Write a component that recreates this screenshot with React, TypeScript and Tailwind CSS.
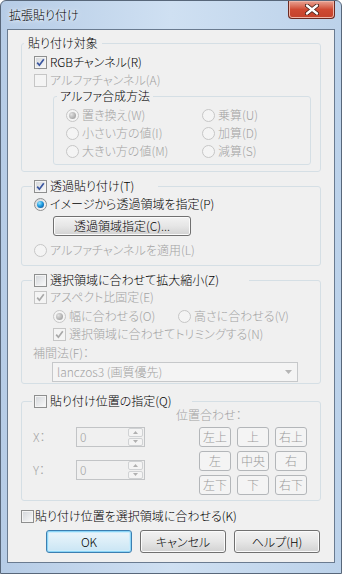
import React from "react";

const GREY = "text-[#a3a3a3]";

function Check({ checked, disabled }: { checked?: boolean; disabled?: boolean }) {
  return (
    <span
      className={`flex h-[13px] w-[13px] shrink-0 items-center justify-center border ${
        disabled
          ? "border-[#c6c6c6] bg-[#f4f4f4]"
          : "border-[#8e8f8f] bg-linear-to-br from-[#d2d5d9] to-[#fbfbfb] shadow-[inset_0_0_0_1px_#f4f4f4]"
      }`}
    >
      {checked && (
        <svg width="9" height="9" viewBox="0 0 9 9">
          <path
            d="M1.2 4.6 L3.4 7.2 L7.8 1.2"
            fill="none"
            stroke={disabled ? "#a8a8a8" : "#3b57a0"}
            strokeWidth="1.7"
          />
        </svg>
      )}
    </span>
  );
}

function Radio({ checked, disabled }: { checked?: boolean; disabled?: boolean }) {
  return (
    <span
      className={`flex h-[13px] w-[13px] shrink-0 items-center justify-center rounded-full border ${
        disabled
          ? "border-[#c6c6c6] bg-[#f4f4f4]"
          : "border-[#8e8f8f] bg-linear-to-br from-[#d2d5d9] to-[#fbfbfb]"
      }`}
    >
      {checked && (
        <span
          className={`h-[7px] w-[7px] rounded-full ${
            disabled
              ? "bg-[radial-gradient(circle_at_35%_35%,#e2e2e2,#a9a9a9_70%)]"
              : "bg-[radial-gradient(circle_at_35%_30%,#9fe6ff,#1d9be0_45%,#0b3f86)]"
          }`}
        />
      )}
    </span>
  );
}

function Row({
  children,
  className = "",
}: {
  children: React.ReactNode;
  className?: string;
}) {
  return (
    <div className={`flex h-[16px] items-center gap-[3px] leading-[16px] whitespace-nowrap ${className}`}>
      {children}
    </div>
  );
}

function Group({
  legend,
  className = "",
  legendCls = "",
  children,
}: {
  legend: React.ReactNode;
  className?: string;
  legendCls?: string;
  children: React.ReactNode;
}) {
  return (
    <fieldset className={`rounded-[3px] border border-[#d5dfe5] ${className}`}>
      <legend className={`h-[16px] leading-[16px] whitespace-nowrap ${legendCls}`}>{legend}</legend>
      {children}
    </fieldset>
  );
}

function PosButton({ label }: { label: string }) {
  return (
    <div className="flex h-[20px] items-center justify-center rounded-[3px] border border-[#b3b6b9] bg-[#f4f4f4] text-[#9a9a9a]">
      {label}
    </div>
  );
}

function Spin() {
  return (
    <div className="flex h-[20px] w-[69px] items-center border border-[#c2c4c6] bg-[#f0f0f0]">
      <span className={`flex-1 pl-[3px] ${GREY}`}>0</span>
      <div className="mr-px flex h-[18px] w-[15px] flex-col gap-px">
        <div className="flex flex-1 items-center justify-center rounded-[2px] border border-[#d0d2d4] bg-[#f4f4f4]">
          <svg width="5" height="3" viewBox="0 0 5 3">
            <path d="M0 3 L2.5 0 L5 3 Z" fill="#b0b0b0" />
          </svg>
        </div>
        <div className="flex flex-1 items-center justify-center rounded-[2px] border border-[#d0d2d4] bg-[#f4f4f4]">
          <svg width="5" height="3" viewBox="0 0 5 3">
            <path d="M0 0 L2.5 3 L5 0 Z" fill="#b0b0b0" />
          </svg>
        </div>
      </div>
    </div>
  );
}

function DlgButton({ label, primary }: { label: string; primary?: boolean }) {
  return (
    <div
      className={`flex h-[23px] w-[86px] items-center justify-center rounded-[3px] border ${
        primary
          ? "border-[#3c7fb1] bg-linear-to-b from-[#ecf5fa] via-[#dbeef8] to-[#c9e5f4] shadow-[inset_0_0_0_1px_#8bd5f7,inset_0_0_0_2px_#cbecfb]"
          : "border-[#707070] bg-linear-to-b from-[#f2f2f2] via-[#e6e6e6] to-[#d2d2d2] shadow-[inset_0_0_0_1px_#fbfbfb]"
      }`}
    >
      {label}
    </div>
  );
}

export default function App() {
  return (
    <div className="flex h-[574px] w-[342px] flex-col overflow-hidden rounded-t-[6px] border border-[#58677a] bg-linear-to-r from-[#b6cce6] via-[#cfe0f2] to-[#bcd2ea] font-['Meiryo_UI','Noto_Sans_CJK_JP',sans-serif] text-[12px] font-light text-black [font-feature-settings:'palt']">
      {/* title bar */}
      <div className="flex h-[28px] shrink-0 items-start justify-between pl-[8px] pr-[6px]">
        <span className="mt-[6px] leading-[16px] [text-shadow:0_0_6px_#fff,0_0_3px_#fff]">拡張貼り付け</span>
        <div className="flex h-[18px] w-[47px] items-center justify-center rounded-b-[4px] border border-t-0 border-[#6b2a22] bg-linear-to-b from-[#e8a293] via-[#cf4a33] to-[#c3422c] shadow-[inset_0_0_0_1px_#f0b4a6]">
          <svg width="14" height="11" viewBox="0 0 14 11">
            <path d="M2 1.5 L12 9.5 M12 1.5 L2 9.5" stroke="#3d1a14" strokeWidth="4" strokeLinecap="round" />
            <path d="M2 1.5 L12 9.5 M12 1.5 L2 9.5" stroke="#ffffff" strokeWidth="2.4" strokeLinecap="round" />
          </svg>
        </div>
      </div>

      {/* client area */}
      <div className="mx-[6px] mb-[10px] flex flex-1 flex-col border border-[#6a7b90] bg-[#f0f0f0]">
        {/* group 1 */}
        <Group legend="貼り付け対象" className="mx-[13px] mt-[5px]" legendCls="ml-[2px] px-[4px]">
          <div className="pl-[12px] pt-[3px] pb-[6px]">
            <Row>
              <Check checked />
              <span>RGBチャンネル(R)</span>
            </Row>
            <Row className="mt-[2px]">
              <Check disabled />
              <span className={GREY}>アルファチャンネル(A)</span>
            </Row>
            <Group
              legend="アルファ合成方法"
              className="ml-[19px] w-[258px]"
              legendCls="ml-[3px] px-[3px]"
            >
              <div className="grid grid-cols-[136px_1fr] gap-y-[2px] pl-[12px] pt-[3px] pb-[5px]">
                <Row>
                  <Radio checked disabled />
                  <span className={GREY}>置き換え(W)</span>
                </Row>
                <Row>
                  <Radio disabled />
                  <span className={GREY}>乗算(U)</span>
                </Row>
                <Row>
                  <Radio disabled />
                  <span className={GREY}>小さい方の値(I)</span>
                </Row>
                <Row>
                  <Radio disabled />
                  <span className={GREY}>加算(D)</span>
                </Row>
                <Row>
                  <Radio disabled />
                  <span className={GREY}>大きい方の値(M)</span>
                </Row>
                <Row>
                  <Radio disabled />
                  <span className={GREY}>減算(S)</span>
                </Row>
              </div>
            </Group>
          </div>
        </Group>

        {/* group 2 */}
        <Group
          className="mx-[13px] mt-[6px]"
          legendCls="ml-[10px] pl-[2px] pr-[24px]"
          legend={
            <span className="flex items-center gap-[3px]">
              <Check checked />
              <span>透過貼り付け(T)</span>
            </span>
          }
        >
          <div className="pl-[12px] pt-[2px] pb-[7px]">
            <Row>
              <Radio checked />
              <span>イメージから透過領域を指定(P)</span>
            </Row>
            <div className="mt-[4px] ml-[19px] w-[138px]">
              <div className="flex h-[20px] items-center justify-center rounded-[3px] border border-[#707070] bg-linear-to-b from-[#f2f2f2] via-[#e6e6e6] to-[#d2d2d2] shadow-[inset_0_0_0_1px_#fbfbfb]">
                透過領域指定(C)...
              </div>
            </div>
            <Row className="mt-[6px]">
              <Radio disabled />
              <span className={GREY}>アルファチャンネルを適用(L)</span>
            </Row>
          </div>
        </Group>

        {/* group 3 */}
        <Group
          className="mx-[13px] mt-[6px]"
          legendCls="ml-[10px] pl-[2px] pr-[30px]"
          legend={
            <span className="flex items-center gap-[3px]">
              <Check />
              <span>選択領域に合わせて拡大縮小(Z)</span>
            </span>
          }
        >
          <div className="pl-[12px] pt-[1px] pb-[1px]">
            <Row>
              <Check checked disabled />
              <span className={GREY}>アスペクト比固定(E)</span>
            </Row>
            <Row className="mt-[3px] pl-[19px]">
              <span className="flex w-[122px] items-center gap-[3px]">
                <Radio checked disabled />
                <span className={GREY}>幅に合わせる(O)</span>
              </span>
              <Radio disabled />
              <span className={GREY}>高さに合わせる(V)</span>
            </Row>
            <Row className="mt-[2px] pl-[19px]">
              <Check checked disabled />
              <span className={GREY}>選択領域に合わせてトリミングする(N)</span>
            </Row>
            <Row className="mt-[3px] -ml-px">
              <span className={GREY}>補間法(F)：</span>
            </Row>
            <div className="mt-[1px] ml-[18px] flex h-[20px] w-[246px] items-center border border-[#c6c8ca] bg-[#f4f4f4] px-[4px]">
              <span className={`flex-1 ${GREY}`}>lanczos3 (画質優先)</span>
              <svg width="7" height="4" viewBox="0 0 7 4" className="mr-[1px]">
                <path d="M0 0 L3.5 4 L7 0 Z" fill="#b5b5b5" />
              </svg>
            </div>
          </div>
        </Group>

        {/* group 4 */}
        <Group
          className="mx-[13px] mt-[9px]"
          legendCls="ml-[10px] pl-[2px] pr-[20px]"
          legend={
            <span className="flex items-center gap-[3px]">
              <Check />
              <span>貼り付け位置の指定(Q)</span>
            </span>
          }
        >
          <div className="flex pl-[11px] pb-[5px]">
            <div className="w-[143px] pt-[18px]">
              <div className="flex h-[20px] items-center">
                <span className={`w-[43px] ${GREY}`}>X：</span>
                <Spin />
              </div>
              <div className="mt-[13px] flex h-[20px] items-center">
                <span className={`w-[43px] ${GREY}`}>Y：</span>
                <Spin />
              </div>
            </div>
            <div>
              <div className={`h-[12px] leading-[12px] ${GREY}`}>位置合わせ：</div>
              <div className="mt-[6px] ml-[23px] grid grid-cols-[32px_32px_32px] gap-x-[6px] gap-y-[4px]">
                {["左上", "上", "右上", "左", "中央", "右", "左下", "下", "右下"].map((l) => (
                  <PosButton key={l} label={l} />
                ))}
              </div>
            </div>
          </div>
        </Group>

        <Row className="mt-[7px] ml-[13px] !gap-[1px]">
          <Check />
          <span>貼り付け位置を選択領域に合わせる(K)</span>
        </Row>

        <div className="mt-[6px] flex gap-[8px] pl-[38px]">
          <DlgButton label="OK" primary />
          <DlgButton label="キャンセル" />
          <DlgButton label="ヘルプ(H)" />
        </div>
      </div>
    </div>
  );
}
